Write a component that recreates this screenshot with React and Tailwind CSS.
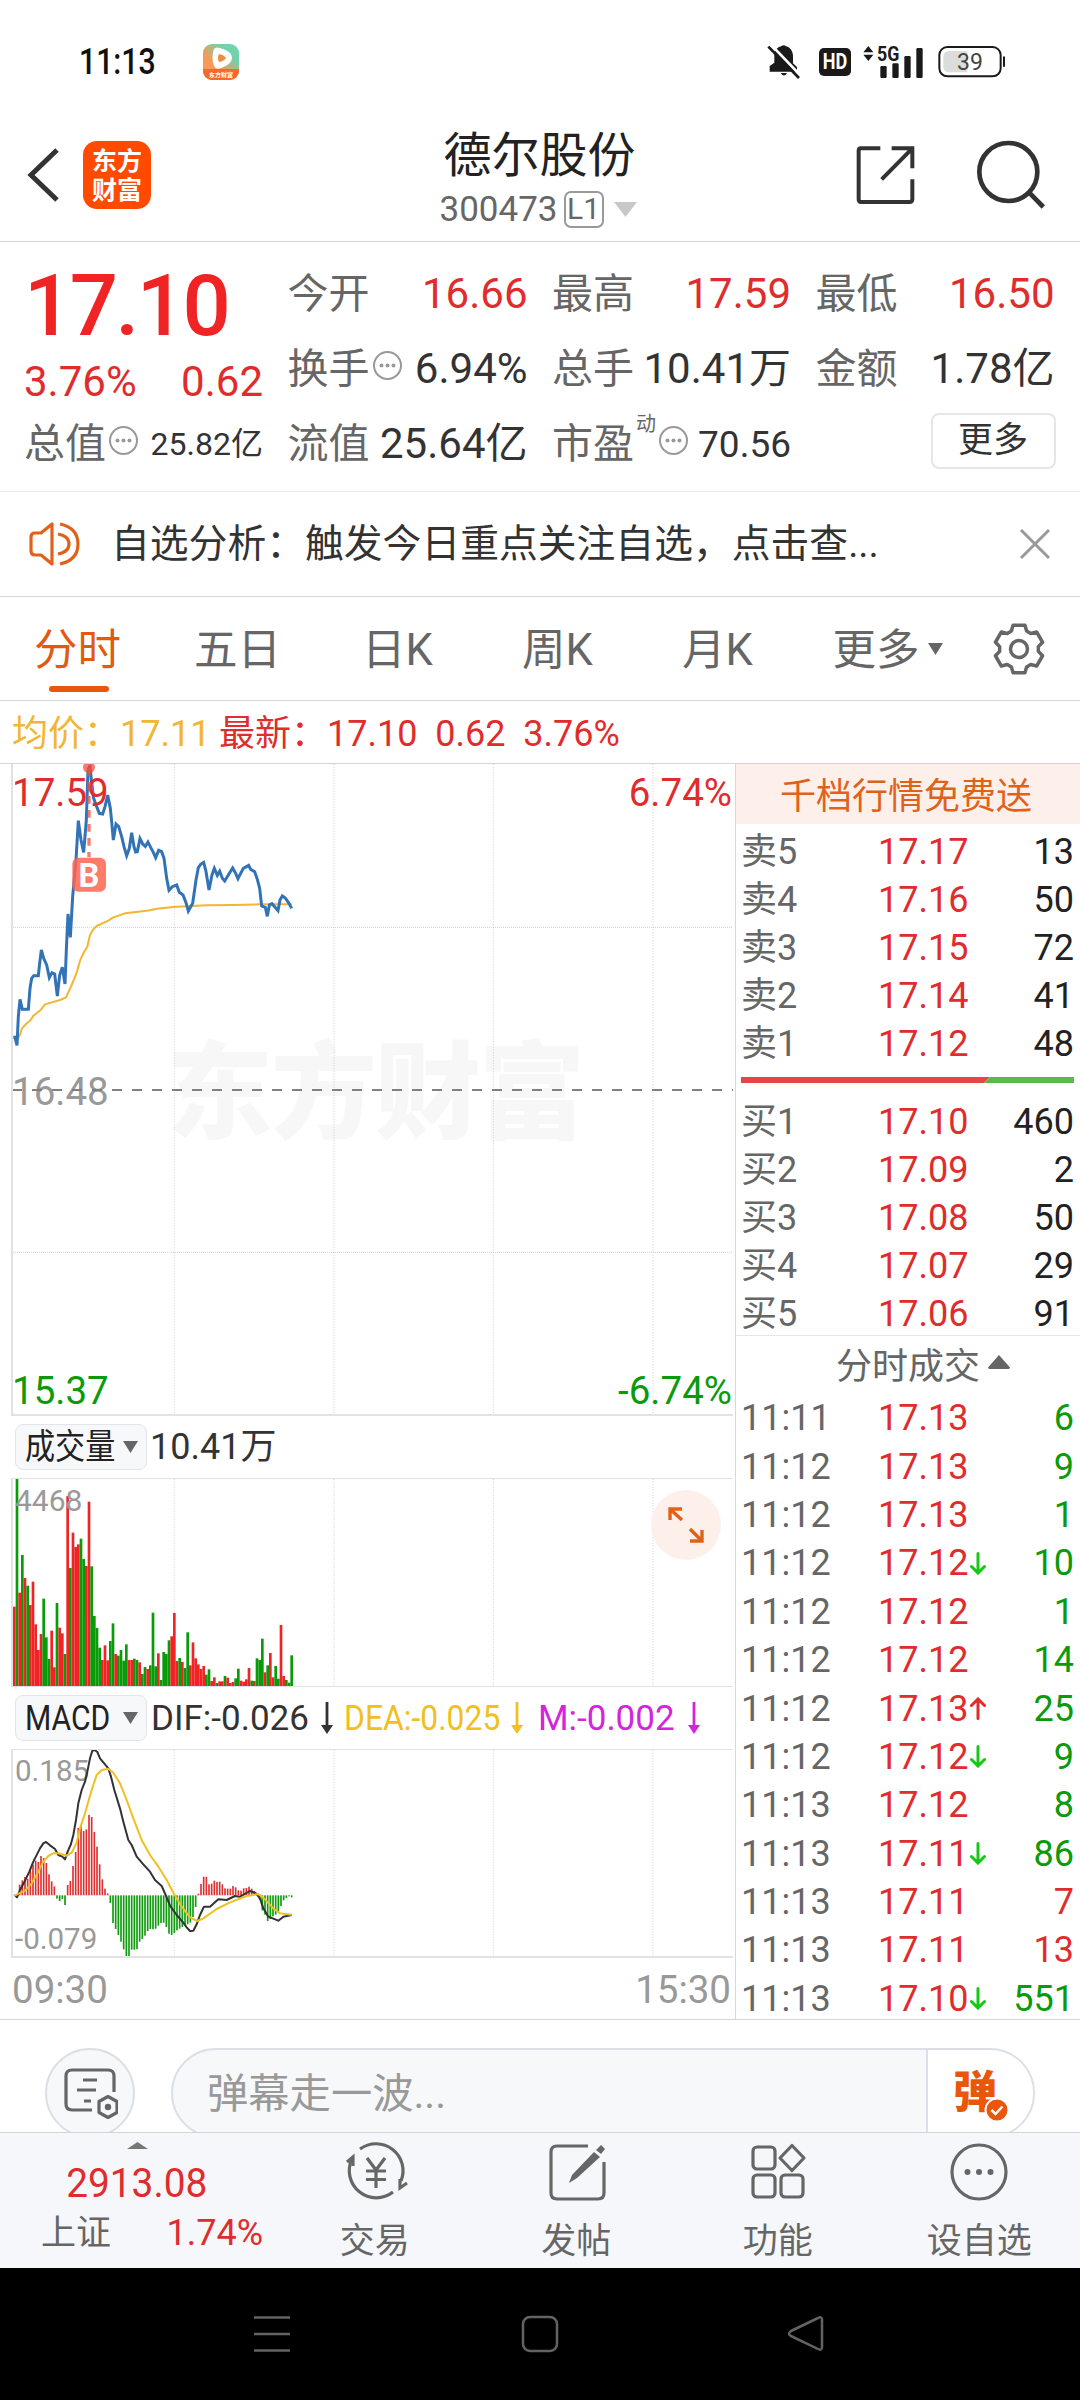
// Stock detail page: quote header, intraday chart with volume and MACD,
// order book, tick list and the bottom bars.

const QUOTE_COLUMNS = [
  [
    { label: '今开', value: '16.66', up: true },
    { label: '换手', value: '6.94%', info: true },
    { label: '流值', value: '25.64亿' },
  ],
  [
    { label: '最高', value: '17.59', up: true },
    { label: '总手', value: '10.41万' },
    { label: '市盈', value: '70.56', info: true, sup: '动', small: true },
  ],
  [
    { label: '最低', value: '16.50', up: true },
    { label: '金额', value: '1.78亿' },
  ],
];

const TABS = ['分时', '五日', '日K', '周K', '月K', '更多'];

const SELLS = [
  ['卖5', '17.17', 13],
  ['卖4', '17.16', 50],
  ['卖3', '17.15', 72],
  ['卖2', '17.14', 41],
  ['卖1', '17.12', 48],
];

const BUYS = [
  ['买1', '17.10', 460],
  ['买2', '17.09', 2],
  ['买3', '17.08', 50],
  ['买4', '17.07', 29],
  ['买5', '17.06', 91],
];

// time, price, volume, price direction, is it a buy
const TICKS = [
  ['11:11', '17.13', 6],
  ['11:12', '17.13', 9],
  ['11:12', '17.13', 1],
  ['11:12', '17.12', 10, 'down'],
  ['11:12', '17.12', 1],
  ['11:12', '17.12', 14],
  ['11:12', '17.13', 25, 'up'],
  ['11:12', '17.12', 9, 'down'],
  ['11:13', '17.12', 8],
  ['11:13', '17.11', 86, 'down'],
  ['11:13', '17.11', 7, null, true],
  ['11:13', '17.11', 13, null, true],
  ['11:13', '17.10', 551, 'down'],
];

// Chart coordinates are thirds of a pixel; one minute is 8 units wide.
const MINUTE = 8;
const FIRST_X = 43;
const GRID_X = [523, 1002, 1480, 1959];

const PRICE_LINE =
  '40,862 45,862 51,886 55,800 60,748 67,778 85,778 90,715 95,685 101,677 115,677 119,640 124,600 131,625 140,645 148,683 156,668 164,672 172,738 179,675 187,652 195,702 199,600 204,492 211,562 218,440 228,330 235,212 243,270 251,307 259,210 264,60 270,45 274,90 281,145 288,165 298,190 308,192 315,170 323,135 331,175 335,215 340,270 348,222 356,230 365,260 372,290 380,317 388,295 395,248 402,290 407,306 412,305 420,266 428,282 436,289 444,276 452,292 460,307 467,323 476,301 485,305 492,325 500,385 507,421 517,410 530,405 538,427 549,435 558,458 565,483 578,460 588,390 595,353 602,343 611,337 618,365 627,420 636,375 643,355 652,376 659,364 667,385 674,393 685,375 698,354 707,370 714,386 723,368 730,355 746,346 752,358 764,365 772,388 779,415 785,468 796,472 802,499 808,465 816,461 824,470 834,482 840,450 847,438 856,444 867,460 875,475';

const AVERAGE_LINE =
  '51,870 60,855 66,835 78,822 92,810 100,797 122,780 135,763 155,757 180,750 198,742 215,705 230,668 240,632 250,610 262,590 270,555 280,538 290,528 325,512 340,502 375,490 415,485 450,481 470,476 520,471 560,469 620,466 700,465 780,463 875,463';

const VOLUME =
  'R238 G621 R280 G393 R324 G301 R243 R313 R185 R108 R156 G262 G146 G81 R166 R56 G249 R175 R158 G96 R570 G354 R460 R417 R425 G442 G381 R360 R553 G359 G210 G174 G115 R78 R122 R77 G135 G188 R96 G91 G108 G76 G125 R78 R78 G82 G78 R71 G36 G57 R51 G62 G220 G59 R98 G18 G102 G96 G137 R149 R219 R75 G84 R72 G54 G161 R62 R131 R83 R65 R51 R60 G34 G50 R15 R26 G9 R14 R14 G30 R25 R9 R12 G23 G52 R16 R13 R20 R54 G16 R15 G83 G78 G142 R41 G62 R99 R26 G60 G22 R183 R30 G18 G10 G92'
    .split(' ')
    .map((v) => ({ up: v[0] === 'R', height: Number(v.slice(1)) }));

const MACD = [
  2, -8, 32, 45, 55, 50, 78, 92, 104, 100, 118, 112, 97, 63, 42, 27, -10, -17, -11, -29, 31, 43, 88, 130, 202, 210,
  193, 198, 241, 235, 190, 146, 93, 48, 20, 6, -23, -83, -101, -119, -139, -162, -182, -186, -163, -163, -161, -139,
  -131, -121, -107, -101, -102, -100, -91, -83, -82, -95, -115, -119, -113, -105, -100, -95, -90, -87, -82, -65, -35,
  5, 34, 56, 55, 33, 35, 44, 40, 41, 33, 21, 20, 20, 28, 24, 15, 14, 21, 22, 26, 20, 13, 5, -13, -45, -58, -77, -71,
  -63, -58, -48, -32, -15, -8, -3, -6,
];

const DIF_LINE =
  '45,466 51,472 60,450 75,422 88,395 100,365 120,325 130,310 138,306 150,316 165,327 175,345 187,350 195,358 203,335 213,312 220,285 228,240 235,190 245,150 255,125 262,95 270,55 277,32 284,30 292,36 300,55 325,85 333,110 343,150 360,205 370,245 385,300 395,315 410,350 430,373 450,395 465,420 485,438 497,465 510,497 530,525 550,548 560,562 570,573 580,572 590,553 600,525 612,500 630,500 655,478 680,480 705,468 720,470 750,453 768,460 780,475 790,505 805,530 835,542 850,530 875,525';

const DEA_LINE =
  '45,466 75,452 95,430 115,395 130,365 145,348 160,340 175,340 200,347 215,338 230,308 240,265 255,220 275,150 290,105 305,90 325,86 340,98 360,130 380,180 400,235 425,300 450,345 475,380 500,420 520,458 545,500 570,532 592,543 610,535 650,507 690,487 740,468 775,462 795,478 820,505 840,520 875,524';

const GEAR = Array.from({ length: 6 }, (_, k) =>
  [[-23, 19.5], [-14, 24.5], [14, 24.5], [23, 19.5]].map(([offset, r]) => {
    const a = ((k * 60 + offset - 90) * Math.PI) / 180;
    return `${(r * Math.cos(a)).toFixed(2)},${(r * Math.sin(a)).toFixed(2)}`;
  }).join(' ')
).join(' ');

function StatusBar() {
  return (
    <div className="flex h-[108px] items-center pt-4 pr-[74px] pl-[79px]">
      <span className="w-[124px] text-[36px] leading-none text-[#111]">
        <span className="inline-block origin-left scale-x-[.84] font-medium">11:13</span>
      </span>
      <svg width="36" height="36" viewBox="0 0 36 36">
        <defs>
          <linearGradient id="app" x1="0" y1="1" x2="1" y2="0">
            <stop offset="0.35" stopColor="#f79a55" />
            <stop offset="0.75" stopColor="#6fd3ae" />
          </linearGradient>
        </defs>
        <rect width="36" height="36" rx="9" fill="url(#app)" />
        <path d="M0 25h36v2a9 9 0 0 1-9 9H9a9 9 0 0 1-9-9z" fill="#f4692f" />
        <path d="M11 5q-3 8 0 17q2 4 7 2q11-4 11-10t-9-9q-7-3-9 0z" fill="#fff" />
        <path d="M16 10q-2 4 0 8q5-1 7-4q-2-3-7-4z" fill="#f08a3c" />
        <text x="18" y="33" fontSize="6" fontWeight="700" fill="#fff" textAnchor="middle">东方财富</text>
      </svg>
      <div className="ml-auto flex items-center">
        <svg width="34" height="36" viewBox="78 42 102 108">
          <path d="M122 48q6-5 12 0q20 6 22 28v24l12 11v14H86v-17l14-10V74q0-20 22-26z" fill="#1a1a1a" />
          <path d="M119 129h19q-9 15-19 0z" fill="#1a1a1a" />
          <path d="M92 46l88 92" stroke="#fff" strokeWidth="8" />
          <path d="M82 50l92 94" stroke="#1a1a1a" strokeWidth="8" />
        </svg>
        <span className="ml-[18px] flex h-7 w-8 items-center justify-center rounded-[5px] bg-[#1a1a1a] text-[22px] leading-none font-bold text-white">
          <span className="scale-x-[.82]">HD</span>
        </span>
        <svg className="ml-3" width="61" height="50" viewBox="369 18 183 150" fill="#1a1a1a">
          <path d="M370 64l15-19l15 19zM370 71h30l-15 19z" />
          <text x="411" y="90" fontSize="62" fontWeight="700" textLength="67" lengthAdjust="spacingAndGlyphs">5G</text>
          <rect x="421" y="105" width="19" height="36" rx="4" />
          <rect x="457" y="97" width="19" height="44" rx="4" />
          <rect x="493" y="75" width="19" height="66" rx="4" />
          <rect x="529" y="51" width="19" height="90" rx="4" />
        </svg>
        <svg className="ml-[14px]" width="68" height="34" viewBox="596 48 204 102">
          <rect x="600" y="54" width="184" height="88" rx="24" fill="none" stroke="#1a1a1a" strokeWidth="6" />
          <path d="M684 66h-54q-18 0-18 18v28q0 18 18 18h54z" fill="#dcdcdc" />
          <rect x="791" y="82" width="6" height="32" rx="3" fill="#1a1a1a" />
          <text x="692" y="122" fontSize="69" fill="#444" textAnchor="middle">39</text>
        </svg>
      </div>
    </div>
  );
}

function Header() {
  return (
    <header className="grid h-[134px] grid-cols-[1fr_auto_1fr] items-center border-b border-[#d4d4d4] pr-[34px] pl-[26px]">
      <div className="flex items-center gap-[23px]">
        <svg width="34" height="56" viewBox="0 0 34 56" fill="none" stroke="#333" strokeWidth="5">
          <path d="M31 3L5 28l26 25" />
        </svg>
        <div className="flex h-[68px] w-[68px] flex-col items-center justify-center rounded-[14px] bg-[#ff4a00] pt-[2px] text-[25px] leading-[29px] font-bold text-white">
          <span>东方</span>
          <span>财富</span>
        </div>
      </div>
      <div className="flex flex-col items-center pt-[9px] pl-1">
        <h1 className="pt-[2px] pl-[3px] text-[48px] leading-[60px] text-[#222]">德尔股份</h1>
        <div className="-mt-[2px] flex h-[50px] items-center text-[35px] leading-none text-[#666]">
          300473
          <span className="ml-[6px] flex h-[37px] w-10 items-center justify-center rounded-[7px] border-2 border-[#999] text-[30px]">
            L1
          </span>
          <svg className="ml-[10px]" width="23" height="15" viewBox="0 0 23 15">
            <path d="M0 0h23L11.500 15z" fill="#c8c8c8" />
          </svg>
        </div>
      </div>
      <div className="flex items-center justify-end gap-[60px]">
        <svg width="60" height="60" viewBox="351 343 180 180" fill="none" stroke="#333" strokeWidth="12">
          <path d="M424 353h-58q-7 0-7 7v146q0 8 7 8h146q8 0 8-8v-60M458 353h62v60M520 353l-92 93" />
        </svg>
        <svg width="70" height="70" viewBox="711 327 210 210" fill="none" stroke="#333" strokeWidth="14">
          <circle cx="808" cy="423" r="87" />
          <path d="M870 484l43 44" />
        </svg>
      </div>
    </header>
  );
}

function InfoDot() {
  return (
    <svg width="31" height="31" viewBox="0 0 31 31" className="mb-[8px] ml-[2px] shrink-0 self-center">
      <circle cx="15.500" cy="15.500" r="13.500" fill="none" stroke="#999" strokeWidth="2" />
      <g fill="#999">
        <circle cx="9.500" cy="15.500" r="2" />
        <circle cx="15.500" cy="15.500" r="2" />
        <circle cx="21.500" cy="15.500" r="2" />
      </g>
    </svg>
  );
}

function QuoteCell({ label, value, up, info, sup, small }) {
  return (
    <div className="-ml-[2px] flex h-[75px] items-center text-[41px] leading-none">
      <span className="text-[#666]">{label}</span>
      {sup && <span className="mb-10 ml-[2px] w-5 text-[20px] text-[#666]">{sup}</span>}
      {info && <InfoDot />}
      <span
        className={
          'ml-auto whitespace-nowrap ' + (small ? 'text-[37px] ' : 'text-[42px] ') + (up ? 'text-[#e02c2c]' : 'text-[#333]')
        }
      >
        {value}
      </span>
    </div>
  );
}

function Quote() {
  return (
    <section className="grid h-[249px] grid-cols-[239px_238px_237px_237px] gap-x-[26.500px] pt-[14.500px] pl-6">
      <div className="flex flex-col">
        <div className="flex h-[100px] items-center text-[85px] leading-none font-medium tracking-[-2.500px] text-[#f02424]">
          17.10
        </div>
        <div className="flex h-[50px] items-center justify-between text-[42px] leading-none text-[#e02c2c]">
          <span>3.76%</span>
          <span>0.62</span>
        </div>
        <div className="flex h-[75px] items-center text-[41px] leading-none">
          <span className="text-[#666]">总值</span>
          <InfoDot />
          <span className="ml-auto text-[32px] text-[#333]">25.82亿</span>
        </div>
      </div>
      {QUOTE_COLUMNS.map((cells, i) => (
        <div key={i} className="flex flex-col">
          {cells.map((c) => (
            <QuoteCell key={c.label} {...c} />
          ))}
          {i === 2 && (
            <button className="mt-[6px] -mr-px h-[56px] w-[125px] self-end rounded-lg border-2 border-[#e6e6e6] text-[35px] leading-none text-[#333]">
              更多
            </button>
          )}
        </div>
      ))}
    </section>
  );
}

function Notice() {
  return (
    <div className="flex h-[106px] items-center border-y border-t-[#ececec] border-b-[#d4d4d4] pr-[29px] pl-[29px]">
      <svg width="52" height="46" viewBox="29 521 52 46" fill="none" stroke="#e0621a" strokeWidth="3.200">
        <path d="M52 524v40l-11-9h-6q-4 0-4-4v-14q0-4 4-4h6z" strokeLinejoin="round" />
        <path d="M58 534q11 2 11 10t-11 10M60 524q18 4 18 20t-18 20" />
      </svg>
      <p className="ml-[30px] pt-px text-[38.800px] leading-none whitespace-nowrap text-[#333]">
        自选分析：触发今日重点关注自选，点击查...
      </p>
      <svg className="ml-auto" width="32" height="32" viewBox="0 0 32 32" stroke="#999" strokeWidth="3">
        <path d="M2 2l28 28M30 2L2 30" />
      </svg>
    </div>
  );
}

function Tabs() {
  return (
    <nav className="flex h-[104px] items-center border-b border-[#d4d4d4] text-[43.500px] leading-none text-[#666]">
      {TABS.map((t, i) => (
        <div
          key={t}
          className={
            'relative flex h-full w-40 items-center justify-center pt-1 pr-[5px] ' +
            (i === 0 ? 'text-[#e05a10]' : '') +
            (i === 5 ? 'ml-[10px]' : '')
          }
        >
          {t}
          {i === 0 && <span className="absolute bottom-2 left-[49px] h-[6px] w-[60px] rounded-full bg-[#e8570c]" />}
          {i === 5 && (
            <svg className="mb-1 ml-2" width="15" height="12" viewBox="0 0 15 12">
              <path d="M0 0h15L7.500 12z" fill="#666" />
            </svg>
          )}
        </div>
      ))}
      <svg className="ml-[22px]" width="54" height="54" viewBox="-27 -27 54 54" fill="none" stroke="#666" strokeWidth="3.500">
        <polygon points={GEAR} strokeLinejoin="round" />
        <circle r="8.500" />
      </svg>
    </nav>
  );
}

function Grid({ top, bottom }) {
  return (
    <g stroke="#cfcfcf" strokeWidth="3" strokeDasharray="3 5">
      {GRID_X.map((x) => (
        <path key={x} d={`M${x} ${top}V${bottom}`} />
      ))}
    </g>
  );
}

function PriceChart() {
  return (
    <div className="relative h-[652px] border-b-2 border-l-2 border-[#e2e2e2] text-[38.500px] leading-none">
      <svg width="720" height="650" viewBox="39 42 2160 1950" fill="none" className="block">
        <text x="500" y="1140" fontSize="318" fontWeight="900" textLength="1256" fill="#f7f7f7">东方财富</text>
        <Grid top={42} bottom={1992} />
        <g stroke="#cfcfcf" strokeWidth="3" strokeDasharray="3 3">
          <path d="M39 532H2199M39 1507H2199" />
        </g>
        <polyline points={AVERAGE_LINE} stroke="#f2b632" strokeWidth="6" strokeLinejoin="round" />
        <polyline points={PRICE_LINE} stroke="#3273b8" strokeWidth="9" />
      </svg>
      <div className="absolute inset-0">
        <span className="absolute top-[10px] -left-px text-[#e02c2c]">17.59</span>
        <span className="absolute top-[10px] right-px text-[#e02c2c]">6.74%</span>
        <span className="absolute top-[309px] -left-px text-[#999]">16.48</span>
        <span className="absolute bottom-[4px] -left-px text-[#0a9a0a]">15.37</span>
        <span className="absolute right-px bottom-[4px] text-[#0a9a0a]">-6.74%</span>
      </div>
      <svg width="720" height="650" viewBox="39 42 2160 1950" className="absolute top-0 left-0">
        <path d="M36 1020H2199" stroke="#808080" strokeWidth="6" strokeDasharray="30 30" />
        <circle cx="267" cy="52" r="18" fill="#f0503c" fillOpacity="0.75" />
        <path d="M267 54V322" stroke="#f0503c" strokeOpacity="0.75" strokeWidth="10" strokeDasharray="23 19" />
        <rect x="217" y="323" width="101" height="102" rx="18" fill="#ff6450" fillOpacity="0.85" />
        <text x="267" y="412" fontSize="98" fontWeight="700" fill="#fff" textAnchor="middle">B</text>
      </svg>
    </div>
  );
}

function IndicatorButton({ children }) {
  return (
    <span className="ml-1 flex h-[46px] w-[132px] items-center rounded-lg border border-[#e3e5ea] bg-[#f7f8fa] pl-[9px] text-[35px] leading-none text-[#222]">
      <span className="w-[98px]">
        <span className="inline-block origin-left scale-x-[.86] whitespace-nowrap">{children}</span>
      </span>
      <svg width="15" height="12" viewBox="0 0 15 12">
        <path d="M0 0h15L7.500 12z" fill="#666" />
      </svg>
    </span>
  );
}

function DownArrow() {
  return (
    <svg width="12" height="32" viewBox="0 0 12 32" fill="currentColor">
      <path d="M4.600 0h2.800v23H12L6 32L0 23h4.600z" />
    </svg>
  );
}

function Volume() {
  return (
    <>
      <div className="flex h-[62px] items-center text-[36px] leading-none text-[#333]">
        <IndicatorButton>成交量</IndicatorButton>
        <span className="ml-[3px]">10.41万</span>
      </div>
      <div className="relative h-[209px] border-y border-l-2 border-[#e2e2e2]">
        <svg width="720" height="207" viewBox="39 207 2160 621" className="block">
          <Grid top={207} bottom={828} />
          {VOLUME.map((v, i) => (
            <rect
              key={i}
              x={FIRST_X + i * MINUTE - 4}
              y={828 - v.height}
              width={MINUTE}
              height={v.height}
              fill={v.up ? '#f02424' : '#0a9a0a'}
            />
          ))}
        </svg>
        <span className="absolute top-[7px] left-[2px] text-[30px] leading-none text-[#999]">4468</span>
        <div className="absolute top-[11px] right-[12px] flex h-[70px] w-[70px] items-center justify-center rounded-full bg-[#fdf0ea]">
          <svg width="36" height="36" viewBox="0 0 36 36" fill="none" stroke="#e0621a" strokeWidth="3.400">
            <path d="M2 13V2h12M2 2l12 11M34 23v11H22M34 34L22 22" />
          </svg>
        </div>
      </div>
    </>
  );
}

function Macd() {
  return (
    <>
      <div className="flex h-[62px] items-center text-[35px] leading-none">
        <IndicatorButton>MACD</IndicatorButton>
        <span className="ml-[4px] flex w-[193px] items-center justify-between pr-[11px] text-[#333]">
          DIF:-0.026
          <DownArrow />
        </span>
        <span className="flex w-[194px] items-center text-[#f0c020]">
          <span className="w-[167px]">
            <span className="inline-block origin-left scale-x-[.91]">DEA:-0.025</span>
          </span>
          <DownArrow />
        </span>
        <span className="flex items-center gap-[13px] text-[#d424dc]">
          M:-0.002
          <DownArrow />
        </span>
      </div>
      <div className="relative h-[209px] border-t border-b-2 border-l-2 border-[#e2e2e2] text-[29.500px] leading-none text-[#999]">
        <svg width="720" height="206" viewBox="39 30 2160 618" fill="none" className="block">
          <Grid top={30} bottom={648} />
          {MACD.map((v, i) => (
            <rect
              key={i}
              x={FIRST_X + i * MINUTE - 2.5}
              y={v > 0 ? 466 - v : 466}
              width="5"
              height={Math.abs(v)}
              fill={v > 0 ? '#e03030' : '#0f9c0f'}
            />
          ))}
        </svg>
        <span className="absolute top-[7px] left-[2px]">0.185</span>
        <span className="absolute bottom-[2px] left-[2px]">-0.079</span>
        <svg width="720" height="206" viewBox="39 30 2160 618" fill="none" className="absolute top-0 left-0">
          <polyline points={DIF_LINE} stroke="#333" strokeWidth="6" strokeLinejoin="round" />
          <polyline points={DEA_LINE} stroke="#f0c020" strokeWidth="6" strokeLinejoin="round" />
        </svg>
      </div>
      <div className="flex h-[62px] items-center justify-between pt-[3px] pr-[2px] pl-px text-[38.500px] leading-none text-[#999]">
        <span>09:30</span>
        <span>15:30</span>
      </div>
    </>
  );
}

function BookRow({ label, price, amount }) {
  return (
    <div className="flex h-12 items-center">
      <span className="w-[137px] text-[#666]">{label}</span>
      <span className="text-[#e02c2c]">{price}</span>
      <span className="ml-auto text-[#222]">{amount}</span>
    </div>
  );
}

function TickRow({ time, price, volume, trend, buy }) {
  return (
    <div className="flex h-[48.400px] items-center">
      <span className="w-[137px] text-[#666]">{time}</span>
      <span className="w-[92px] text-[#e02c2c]">{price}</span>
      {trend && (
        <svg
          width="16"
          height="23"
          viewBox="0 0 16 23"
          fill="none"
          strokeWidth="3"
          strokeLinecap="round"
          className={trend === 'up' ? 'rotate-180 stroke-[#e02c2c]' : 'stroke-[#14c814]'}
        >
          <path d="M8 1.500v19M1.500 14.500L8 21l6.500-6.500" />
        </svg>
      )}
      <span className={'ml-auto ' + (buy ? 'text-[#e02c2c]' : 'text-[#0a9a0a]')}>{volume}</span>
    </div>
  );
}

function OrderBook() {
  return (
    <aside className="flex h-[1255px] w-[345px] flex-col border-l border-[#d4d8dc] text-[36px] leading-none">
      <div className="flex h-[60px] shrink-0 items-center justify-center bg-[#fdf0ea] pt-[5px] pr-1 text-[#e0621a]">
        千档行情免费送
      </div>
      <div className="shrink-0 pt-[4px] pr-[6px] pl-[5px]">
        {SELLS.map(([label, price, amount]) => (
          <BookRow key={label} label={label} price={price} amount={amount} />
        ))}
        <svg width="333" height="6" viewBox="0 0 333 6" className="mt-[9px] mb-[15px] block">
          <path d="M0 0h249l-6 6H0z" fill="#e64646" />
          <path d="M249 0h84v6h-90z" fill="#5cb848" />
        </svg>
        {BUYS.map(([label, price, amount]) => (
          <BookRow key={label} label={label} price={price} amount={amount} />
        ))}
      </div>
      <div className="-mt-[3px] flex h-[59px] shrink-0 items-center justify-center gap-2 border-t border-[#e6e6e6] pt-[3px] pl-[30px] text-[#666]">
        分时成交
        <svg width="22" height="14" viewBox="0 0 22 14" className="mb-[10px]">
          <path d="M11 0l11 12.500q0 1.500-2 1.500H2q-2 0-2-1.500z" fill="#666" />
        </svg>
      </div>
      <div className="shrink-0 pr-[6px] pl-[5px]">
        {TICKS.map(([time, price, volume, trend, buy], i) => (
          <TickRow key={i} time={time} price={price} volume={volume} trend={trend} buy={buy} />
        ))}
      </div>
    </aside>
  );
}

function BarrageInput() {
  return (
    <div className="flex h-[112px] items-start overflow-hidden pt-7 pl-[45px]">
      <div className="flex h-[90px] w-[90px] shrink-0 items-center justify-center rounded-full border-2 border-[#dcdfe5] bg-[#f7f8fa]">
        <svg width="56" height="52" viewBox="62 2068 56 52" fill="none" stroke="#666" strokeWidth="3.200">
          <path d="M114 2093v-16q0-6-6-6H72q-6 0-6 6v28q0 6 6 6h20" />
          <path d="M83 2081h14M77 2091h19M84 2102h7" />
          <path d="M108 2097.500l9 5v11l-9 5l-9-5v-11z" strokeLinejoin="round" />
          <circle cx="108" cy="2108" r="1.600" />
        </svg>
      </div>
      <div className="ml-9 flex h-[90px] w-[864px] overflow-hidden rounded-full border-2 border-[#dcdfe5] bg-[#f7f8fa]">
        <div className="flex flex-1 items-center pt-1 pl-[34px] text-[41.300px] leading-none text-[#999]">
          弹幕走一波...
        </div>
        <div className="relative w-[107px] border-l-2 border-[#dcdfe5] bg-white">
          <span className="absolute top-[21px] left-[25px] text-[44px] leading-none font-black text-[#e8570c]">弹</span>
          <svg className="absolute top-[47px] left-[56px]" width="26" height="26" viewBox="0 0 26 26">
            <circle cx="13" cy="13" r="11.500" fill="#e8570c" stroke="#fff" strokeWidth="2" />
            <path d="M7.500 13l4 4l7-7.500" fill="none" stroke="#fff" strokeWidth="2.500" />
          </svg>
        </div>
      </div>
    </div>
  );
}

const NAV_ITEMS = [
  {
    label: '交易',
    icon: (
      <>
        <path d="M16 7A27 27 0 0 1 57 39M49 50A27 27 0 0 1 8 17" />
        <path d="M3 20l6-5v9M63 41l-7 5v-9" />
        <path d="M23 16l9 12L41 16M32 28v18M22 29h20M22 37.500h20" />
      </>
    ),
  },
  {
    label: '发帖',
    icon: (
      <>
        <path d="M43 4H12q-6 0-6 6v41q0 6 6 6h41q6 0 6-6V20" />
        <path d="M56 3l4 4l-4 5l-5-4zM49 10l6 5L32 36l-8 5l3-8z" fill="#666" stroke="none" />
      </>
    ),
  },
  {
    label: '功能',
    icon: (
      <>
        <rect x="6" y="5" width="22" height="22" rx="4" />
        <path d="M45 3.500l12 12.500L45 28.500L33 16z" strokeLinejoin="round" />
        <rect x="6" y="33" width="22" height="22" rx="4" />
        <rect x="34" y="33" width="22" height="22" rx="4" />
      </>
    ),
  },
  {
    label: '设自选',
    icon: (
      <>
        <circle cx="31" cy="30" r="27" />
        <g fill="#666" stroke="none">
          <circle cx="19.500" cy="30" r="3" />
          <circle cx="31" cy="30" r="3" />
          <circle cx="42.500" cy="30" r="3" />
        </g>
      </>
    ),
  },
];

function BottomNav() {
  return (
    <footer className="flex h-[136px] border-t border-[#d4d4d4] bg-[#f6f7fa] text-[35px] leading-none text-[#666]">
      <div className="flex w-[274px] flex-col items-center pt-[9px]">
        <svg width="21" height="7" viewBox="0 0 21 7" className="block">
          <path d="M10.500 0L21 7H0z" fill="#777" />
        </svg>
        <span className="mt-[15px] text-[40px] text-[#e02c2c]">
          <span className="inline-block scale-x-[.97]">2913.08</span>
        </span>
        <div className="mt-[11px] flex w-full items-center justify-between pr-[11px] pl-[41px]">
          <span>上证</span>
          <span className="text-[36px] text-[#e02c2c]">1.74%</span>
        </div>
      </div>
      {NAV_ITEMS.map((item) => (
        <div key={item.label} className="flex flex-1 flex-col items-center pt-[9px]">
          <svg width="62" height="60" viewBox="0 0 62 60" fill="none" stroke="#666" strokeWidth="3.200" className="overflow-visible">
            {item.icon}
          </svg>
          <span className="mt-[22px]">{item.label}</span>
        </div>
      ))}
    </footer>
  );
}

function SystemNav() {
  return (
    <div className="h-[132px] bg-black">
      <svg width="1080" height="132" viewBox="0 2268 1080 132" fill="none" stroke="#636363" strokeWidth="2.500">
        <path d="M254 2317.500h36M254 2334h36M254 2350.500h36" />
        <rect x="523" y="2317" width="34" height="34" rx="7" />
        <path d="M818 2318q4-2 4 2v27q0 4-4 2l-27-13q-4-2 0-5z" strokeLinejoin="round" />
      </svg>
    </div>
  );
}

export default function App() {
  return (
    <div className="flex h-[2400px] w-[1080px] flex-col overflow-hidden bg-white font-[Roboto,'Noto_Sans_CJK_SC',sans-serif]">
      <StatusBar />
      <Header />
      <Quote />
      <Notice />
      <Tabs />
      <div className="flex h-[62px] items-center pt-[3px] pl-[12px] text-[36px] leading-none whitespace-pre text-[#e02c2c]">
        <span className="w-[207px] text-[#f2b632]">均价：17.11</span>
        <span>最新：17.10  0.62  3.76%</span>
      </div>
      <main className="flex h-[1257px] border-y border-[#d4d4d4]">
        <div className="w-[735px] pr-[2px] pl-[11px]">
          <PriceChart />
          <Volume />
          <Macd />
        </div>
        <OrderBook />
      </main>
      <BarrageInput />
      <BottomNav />
      <SystemNav />
    </div>
  );
}
